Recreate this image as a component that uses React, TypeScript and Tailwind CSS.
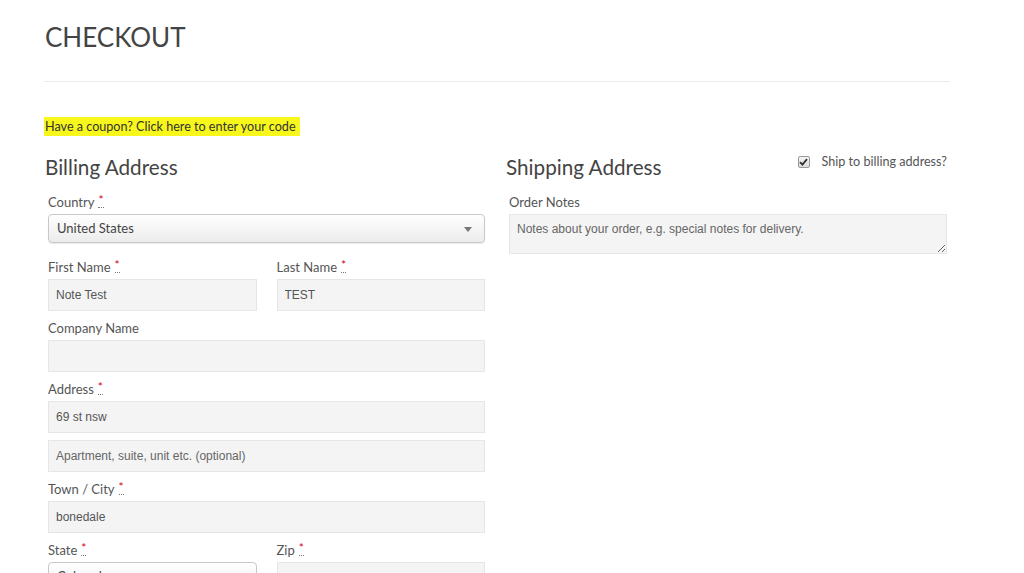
import React from "react";

const lato = { fontFamily: "Lato, 'Open Sans', sans-serif" };

function Req() {
  return (
    <abbr
      title="required"
      className="ml-[4px] text-[#d0021b] no-underline border-b border-dotted border-[#777] leading-[10px] inline-block h-[13px] align-top mt-[2px] text-[12px]"
    >
      *
    </abbr>
  );
}

function Label({ text, req }: { text: string; req?: boolean }) {
  return (
    <div className="h-[18px] leading-[18px] text-[13px] text-[#555] mb-[3px] flex items-start font-['Lato',sans-serif]">
      <span>{text}</span>
      {req && <Req />}
    </div>
  );
}

function Input({ value, placeholder }: { value?: string; placeholder?: string }) {
  return (
    <input
      readOnly
      defaultValue={value}
      placeholder={placeholder}
      className="block w-full h-[32px] bg-[#f4f4f4] border border-[#e6e6e6] px-[7px] text-[12px] text-[#555] placeholder:text-[#666] outline-none font-['Liberation_Sans',Arial,sans-serif]"
    />
  );
}

function Select({ value }: { value: string }) {
  return (
    <div className="relative h-[29px] w-full rounded-[4px] border border-[#c8c8c8] bg-gradient-to-b from-[#ffffff] to-[#ececec] shadow-[0_1px_1px_rgba(0,0,0,0.08)] flex items-center pl-[8px] text-[13px] text-[#444] font-['Lato',sans-serif]">
      <span>{value}</span>
      <span className="absolute right-[12px] top-[12px] w-0 h-0 border-l-[4px] border-r-[4px] border-t-[5px] border-l-transparent border-r-transparent border-t-[#777]" />
    </div>
  );
}

export default function App() {
  return (
    <div className="min-h-[573px] bg-white overflow-hidden" style={lato}>
      <div className="ml-[44px] w-[906px]">
        <div className="pt-[21px] pl-[1px] h-[53px] leading-[32px] text-[26px] text-[#444] font-['Lato',sans-serif]">
          CHECKOUT
        </div>
        <div className="mt-[28px] h-px bg-[#ebebeb]" />
        <div className="mt-[31px]">
          <span className="inline-block bg-[#f7f71c] h-[19px] leading-[19px] pl-[1px] pr-[4px] text-[12.6px] text-[#333] font-['Lato',sans-serif]">
            Have a coupon? Click here to enter your code
          </span>
        </div>
        <div className="mt-[16px] ml-[1px] grid grid-cols-[443px_444px] gap-x-[18px]">
          {/* Billing */}
          <div>
            <h3 className="h-[28px] leading-[28px] text-[20.7px] text-[#444] font-['Lato',sans-serif]">
              Billing Address
            </h3>
            <div className="mt-[12px] pl-[3px] pr-[3px]">
              <Label text="Country" req />
              <Select value="United States" />
              <div className="mt-[15px] grid grid-cols-2 gap-x-[20px]">
                <div>
                  <Label text="First Name" req />
                  <Input value="Note Test" />
                </div>
                <div>
                  <Label text="Last Name" req />
                  <Input value="TEST" />
                </div>
              </div>
              <div className="mt-[8px]">
                <Label text="Company Name" />
                <Input value="" />
              </div>
              <div className="mt-[8px]">
                <Label text="Address" req />
                <Input value="69 st nsw" />
                <div className="mt-[7px]">
                  <Input placeholder="Apartment, suite, unit etc. (optional)" />
                </div>
              </div>
              <div className="mt-[8px]">
                <Label text="Town / City" req />
                <Input value="bonedale" />
              </div>
              <div className="mt-[8px] grid grid-cols-2 gap-x-[20px]">
                <div>
                  <Label text="State" req />
                  <Select value="Colorado" />
                </div>
                <div>
                  <Label text="Zip" req />
                  <Input value="" />
                </div>
              </div>
            </div>
          </div>
          {/* Shipping */}
          <div>
            <div className="flex items-start justify-between">
              <h3 className="h-[28px] leading-[28px] text-[20.7px] text-[#444] font-['Lato',sans-serif]">
                Shipping Address
              </h3>
              <label className="flex items-center mt-0 mr-[3px] text-[12.6px] text-[#555] font-['Lato',sans-serif] leading-[18px]">
                <span className="w-[12px] h-[12px] rounded-[2px] border border-[#9a9a9a] bg-gradient-to-b from-[#f4f4f4] to-[#dcdcdc] flex items-center justify-center mr-[12px]">
                  <svg width="9" height="8" viewBox="0 0 9 8">
                    <path d="M1 4.2 L3.4 6.6 L8 1.2" fill="none" stroke="#333" strokeWidth="1.8" />
                  </svg>
                </span>
                Ship to billing address?
              </label>
            </div>
            <div className="mt-[12px] pl-[3px] pr-[3px]">
              <Label text="Order Notes" />
              <textarea
                readOnly
                placeholder="Notes about your order, e.g. special notes for delivery."
                className="block w-full h-[40px] bg-[#f4f4f4] border border-[#e6e6e6] px-[7px] py-[7px] text-[12px] leading-[15px] text-[#555] placeholder:text-[#666] outline-none font-['Liberation_Sans',Arial,sans-serif]"
              />
            </div>
          </div>
        </div>
      </div>
    </div>
  );
}
